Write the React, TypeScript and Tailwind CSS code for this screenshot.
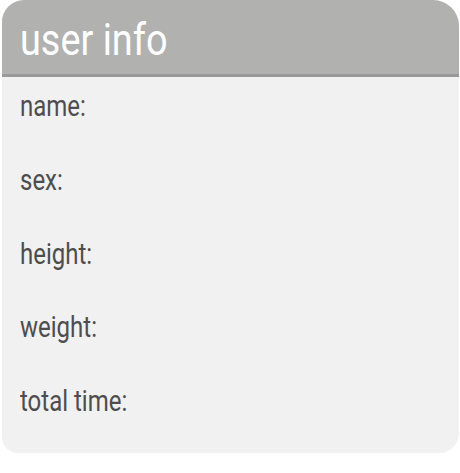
import React from "react";

const labels = ["name:", "sex:", "height:", "weight:", "total time:"];

export default function App() {
  return (
    <div className="w-[460px] h-[473px] bg-white pl-[2px]" style={{ fontFamily: "Roboto, 'Liberation Sans', sans-serif" }}>
      <div className="w-[457px] h-[453px] bg-[#f1f1f1] rounded-tl-[22px] rounded-tr-[26px] rounded-bl-[16px] rounded-br-[20px] overflow-hidden flex flex-col">
        <div className="h-[77px] bg-[#b1b1af] border-b-[3px] border-[#999999] pt-[18px] pl-[18px]">
          <span className="inline-block origin-left scale-x-[0.86] text-[44px] leading-[44px] text-white">user info</span>
        </div>
        <div className="flex flex-col gap-[43.75px] pt-[14px] pl-[18px]">
          {labels.map((l) => (
            <div key={l} className="h-[30px]">
              <span className="inline-block origin-left scale-x-[0.8] text-[30px] leading-[30px] text-[#4d4d4d]">{l}</span>
            </div>
          ))}
        </div>
      </div>
    </div>
  );
}
